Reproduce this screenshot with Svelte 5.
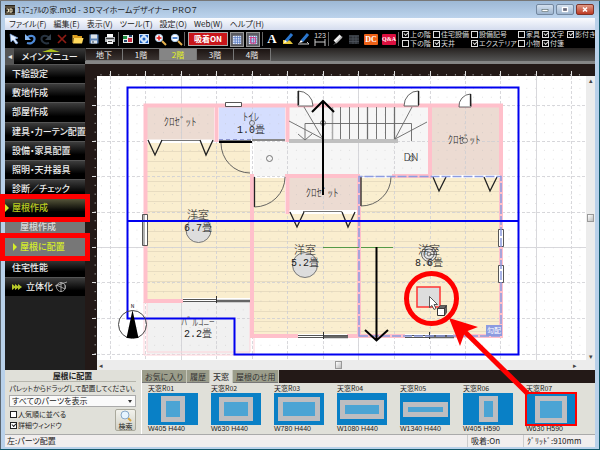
<script>
  const menus = ['ファイル(F)', '編集(E)', '表示(V)', 'ツール(T)', '設定(O)', 'Web(W)', 'ヘルプ(H)'];
  const floors = ['地下', '1階', '2階', '3階', '4階'];
  const toggles = [
    { w: 31, items: [['上の階', true], ['下の階', false]] },
    { w: 38, items: [['住宅設備', false], ['天井', true]] },
    { w: 47, items: [['設備記号', false], ['エクステリア', true]] },
    { w: 24, items: [['家具', false], ['小物', false]] },
    { w: 25, items: [['文字', true], ['付箋', true]] },
    { w: 30, items: [['影付き', true]] }
  ];
  const side = [
    { t: '下絵設定' }, { t: '敷地作成' }, { t: '部屋作成' }, { t: '建具・カーテン配置' },
    { t: '設備・家具配置' }, { t: '照明・天井器具' }, { t: '診断／チェック' },
    { t: '屋根作成', k: 'open', mark: true },
    { t: '屋根作成', k: 'sub' },
    { t: '屋根に配置', k: 'sub on', mark: true },
    { t: '住宅性能' }, { t: '立体化', k: 'solid' }
  ];
  const tabs = ['お気に入り', '履歴', '天窓', '屋根のせ用'];
  const parts = [
    { n: '天窓R01', s: 'W405 H440', w: 24, h: 26 },
    { n: '天窓R02', s: 'W630 H440', w: 34, h: 24 },
    { n: '天窓R03', s: 'W780 H440', w: 42, h: 24 },
    { n: '天窓R04', s: 'W1080 H440', w: 44, h: 19 },
    { n: '天窓R05', s: 'W1340 H440', w: 45, h: 15 },
    { n: '天窓R06', s: 'W405 H590', w: 19, h: 26 },
    { n: '天窓R07', s: 'W630 H590', w: 32, h: 27, picked: true }
  ];
  const gx = [110, 145, 181, 216, 252, 287, 323, 358, 394, 430, 465, 500, 536, 571];
  const gy = [105, 141, 176, 212, 247, 282, 318, 354];
  const solid = [181, 358, 536, 247];
  const minorX = Array.from({ length: 55 }, (_, i) => 101 + i * 8.86);
  const minorY = Array.from({ length: 32 }, (_, i) => 79 + i * 8.86);
</script>

<div class="window">
  <header class="title">
    <svg width="10" height="10" viewBox="0 0 10 10"><rect width="10" height="10" fill="#2b251d" /><path d="M0 2h10M0 9h10" stroke="#887c64" /><path d="M1.500 4h2v3h-2M5 3.500v4M5 4h2v3h-2" stroke="#eee2c0" fill="none" /></svg>
    <h1>1ﾏﾆｭｱﾙの家.m3d - ３Ｄマイホームデザイナー ＰＲＯ７</h1>
    <button class="wb" aria-label="最小化"><svg width="16" height="9"><rect x="5" y="4.500" width="6" height="2" fill="#fff" stroke="#566" stroke-width=".6" /></svg></button>
    <button class="wb" aria-label="最大化"><svg width="16" height="9"><rect x="5.500" y="2.500" width="5" height="4" fill="#667" stroke="#fff" stroke-width="1.300" /></svg></button>
    <button class="wb close" aria-label="閉じる"><svg width="16" height="9"><path d="M6 2.500l4 4M10 2.500l-4 4" stroke="#fff" stroke-width="1.600" /></svg></button>
  </header>

  <nav class="menu">{#each menus as m}<button>{m}</button>{/each}</nav>

  <div class="tools">
    <button aria-label="選択"><svg viewBox="0 0 16 16"><path d="M4 3l8 4-3 1 3 4-2 1-3-4-2 2z" fill="#e6f0ff" stroke="#7ba3e0" stroke-width=".7" /></svg></button>
    <button aria-label="元に戻す"><svg viewBox="0 0 16 16"><path d="M5 6.500C9 3.500 13 5 12.500 8.500S8 13 5 12" fill="none" stroke="#4e8ad8" stroke-width="2.200" /><path d="M3 3v6h6z" fill="#8bb9f0" /></svg></button>
    <button aria-label="やり直し"><svg viewBox="0 0 16 16"><path d="M11 6.500C7 3.500 3 5 3.500 8.500S8 13 11 12" fill="none" stroke="#273341" stroke-width="2" /><path d="M13 3v6H7z" fill="#34404c" /></svg></button>
    <button aria-label="削除"><svg viewBox="0 0 16 16"><path d="M4 4l8 8M12 4l-8 8" stroke="#8e1c14" stroke-width="1.700" /></svg></button>
    <button aria-label="開く"><svg viewBox="0 0 16 16"><path d="M3 4h4l1 1h4v2H3z" fill="#d99b1e" /><path d="M4 7h9.500L12 12.500H3z" fill="#ffd95c" /><path d="M3 4v8" stroke="#f0bd40" /></svg></button>
    <button aria-label="保存"><svg viewBox="0 0 16 16"><path d="M3.500 3.500h9v9h-9z" fill="#5c83b5" /><path d="M5 3.500h6v4H5zM5 9.500h6v3H5z" fill="#dde4ea" /><path d="M6 11h2" stroke="#345" /></svg></button>
    <button aria-label="印刷"><svg viewBox="0 0 16 16"><path d="M5 3h6v3H5z" fill="#fff" /><path d="M3 6h10v5H3z" fill="#b4b8bc" /><path d="M5 9h6v4H5z" fill="#f2f2f2" /><path d="M4 7.500h8M6 10.500h4" stroke="#444" /></svg></button>
    <i></i>
    <button aria-label="3D表示"><svg viewBox="0 0 16 16"><path d="M3 4h10v8H3z" fill="#e8eee8" /><path d="M3 5h4v3H3z" fill="#229144" /><path d="M8 7h4v4H8z" fill="#c92b40" /><path d="M4 9h3v2H4zM9 4h3v2H9z" fill="#26456e" /></svg></button>
    <button aria-label="全体表示"><svg viewBox="0 0 16 16"><path d="M3 3h10v10H3z" fill="#cfe3fa" /><path d="M4 4h3L4 7zM12 4H9l3 3zM4 12h3L4 9zM12 12H9l3-3z" fill="#195ec0" /><circle cx="8" cy="8" r="1.500" fill="#195ec0" /></svg></button>
    <button aria-label="拡大"><svg viewBox="0 0 16 16"><path d="M10 10l4 4" stroke="#e8b44e" stroke-width="2" /><circle cx="7" cy="7" r="3.700" fill="#fff" stroke="#aac8e8" /><path d="M7 4.500v5M4.500 7h5" stroke="#e21e1e" stroke-width="1.500" /></svg></button>
    <button aria-label="縮小"><svg viewBox="0 0 16 16"><path d="M10 10l4 4" stroke="#e8b44e" stroke-width="2" /><circle cx="7" cy="7" r="3.700" fill="#fff" stroke="#aac8e8" /><path d="M4.500 7h5" stroke="#1d62c4" stroke-width="1.500" /></svg></button>
    <i></i>
    <button class="snap">吸着ON</button>
    <button class="framed" aria-label="グリッド"><svg viewBox="0 0 13 14"><path d="M2 3h9v9H2z" fill="#e8eefc" /><path d="M2 5h9M2 7.500h9M2 10h9M4.500 3v9M7 3v9M9.500 3v9" stroke="#4a6fbb" stroke-width=".8" /></svg></button>
    <button class="framed" aria-label="寸法グリッド"><svg viewBox="0 0 13 14"><path d="M2 3h9v9H2z" fill="#e8eefc" /><path d="M2 5h9M2 7.500h9M2 10h9M4.500 3v9M7 3v9M9.500 3v9" stroke="#4a6fbb" stroke-width=".8" /><path d="M4 4v7h5V5H3" stroke="#e5317a" fill="none" /></svg></button>
    <i></i>
    <button class="letter">A</button>
    <button aria-label="塗り"><svg viewBox="0 0 16 16"><path d="M3 9l7 .500 3 3.500H3z" fill="#e8c83a" /><path d="M6 10l6-7" stroke="#2b77cf" stroke-width="3" /><path d="M4 12l1-3 2 2z" fill="#fff" /></svg></button>
    <button aria-label="線"><svg viewBox="0 0 16 16"><path d="M2 13h11l-2-2" stroke="#ccc" fill="none" /><path d="M6 10l6-7" stroke="#2b77cf" stroke-width="3" /><path d="M3 12l2-3 2 2z" fill="#fff" /></svg></button>
    <button class="dim">123<svg viewBox="0 0 12 7"><path d="M1 0v7M11 0v7M1 3h10" stroke="#ccc" fill="none" /></svg></button>
    <i></i>
    <button aria-label="消しゴム"><svg viewBox="0 0 16 16"><path d="M5 11l6-6" stroke="#eee" stroke-width="4" /><path d="M4 13.500l8-8" stroke="#888" /></svg></button>
    <button aria-label="表"><svg viewBox="0 0 16 16"><path d="M3 4h10v9H3z" fill="#2c3036" /><path d="M3 5h10M3 8h10M3 10.500h10M7 5v8M10 5v8" stroke="#4f555d" stroke-width=".8" /></svg></button>
    <button class="badge dc">DC</button>
    <button class="badge qa">Q&amp;A</button>
    <i></i>
    <div class="toggles">
      {#each toggles as g}
        <div style="width:{g.w}px">
          {#each g.items as [t, on]}<label><input type="checkbox" checked={on} />{t}</label>{/each}
        </div>
      {/each}
    </div>
  </div>

  <div class="heads">
    <button class="back" aria-label="戻る">◂</button>
    <div class="mainmenu">メインメニュー</div>
    <div class="floors">
      {#each floors as f}<button class:on={f === '2階'}>{f}</button>{/each}
    </div>
  </div>

  <main>
    <aside>
      <div class="list">
        {#each side as s}
          <button class={s.k ?? ''}>
            {#if s.k === 'solid'}<svg class="tri" width="10" height="6"><path d="M0 0l4 3-4 3zM3 0l4 3-4 3zM6 0l4 3-4 3z" fill="#b6c829" /></svg>{/if}
            {s.t}
            {#if s.k === 'solid'}<svg width="12" height="12" viewBox="0 0 12 12" fill="none" stroke="#bbb" stroke-width=".8"><circle cx="6" cy="6" r="4.500" /><path d="M0 5l6-2 6-2M1 4l5 2M6 1v10M6 6l4 2V4" /></svg>{/if}
            {#if s.mark}<span class="ring"></span>{/if}
          </button>
        {/each}
      </div>
    </aside>

    <section class="plan">
      <svg class="draw" aria-label="間取り図">
        <defs>
          <pattern id="dots" x="101" y="79" width="8.860" height="8.860" patternUnits="userSpaceOnUse"><rect width="1" height="1" fill="#b9b9b9" opacity=".4" /></pattern>
          <pattern id="floor" x="0" y="141" width="20" height="10" patternUnits="userSpaceOnUse"><rect width="20" height="10" fill="#faeecf" /><rect width="20" height="1" fill="#e8dcc0" /></pattern>
        </defs>
        <g transform="translate(-85 -64)">
          <rect x="85" y="64" width="2000" height="2000" fill="#231917" />
          <rect x="97" y="76" width="2000" height="2000" fill="#fff" />
          <g stroke="#999" stroke-width="1">
            {#each minorX as x}<path d="M{x} 74v1.500" />{/each}
            {#each minorY as y}<path d="M94.500 {y}h1.500" />{/each}
            {#each gx as x}<path d="M{x + 0.5} 71v5" stroke="#ddd" />{/each}
            {#each gy as y}<path d="M92 {y + 0.5}h4" stroke="#ddd" />{/each}
          </g>

          <path d="M147 107h67v33h-67z" fill="#ecdbd2" />
          <path d="M219 107h66v33h-66z" fill="#d5defe" />
          <path d="M254 142h34V107h141v69H254z" fill="#f6f6f6" />
          <path d="M432 107h68v68h-68z" fill="#ecdbd2" />
          <path d="M289 178h68v32h-68z" fill="#ecdbd2" />
          <path d="M147 143h103v156H147zM254 178h31v36h73v120H254zM360 178h140v156H360z" fill="url(#floor)" />
          <path d="M147 302h103v52H147z" fill="#f1f1f1" />
          <rect x="97" y="76" width="2000" height="2000" fill="url(#dots)" />
          <g stroke="#cfcfd4" opacity=".8">
            {#each gx as x}<path d="M{x + 0.5} 76v284" stroke-dasharray={solid.includes(x) ? 'none' : '3 2'} />{/each}
            {#each gy as y}<path d="M97 {y + 0.5}h490" stroke-dasharray={solid.includes(y) ? 'none' : '3 2'} />{/each}
          </g>

          <path d="M144 302v53h110v-18M147 302v50h103v-50" fill="none" stroke="#ffd3da" />
          <g fill="none" stroke="#ffc0cb" stroke-width="4">
            <path d="M183 301h-37.500V105.500H501V336H252V174" />
            <path d="M216.500 105v37M287.500 105v37M285 176h75M287.500 176v38M359 176v160M392 176h38M430 105v73" />
          </g>
          <path d="M147 141h66M290 212h66M432 176.500h68" stroke="#fff" stroke-width="3" />
          <path d="M161 140.500h39M303 211.500h39M219 140.500h32" stroke="#777" />
          <path d="M219 139.500h33" stroke="#8b94d0" stroke-dasharray="4 3" />
          <path d="M219 142h33" stroke="#000" stroke-width="2" />
          <path d="M252 140h33" stroke="#888" stroke-width="2" />

          <g fill="none" stroke="#222" stroke-width="1.300">
            <path d="M148 140l7 15 7-15M200 140l6 15 7-15M290 212l7 15 7-15M342 212l6 15 7-15M433 177l6 14 7-14M484 177l6 14 7-14" />
            <path d="M254.500 177v30M361 177v29M298.500 91v14M418.500 91v14M470.500 94v12" />
          </g>
          <g fill="none" stroke="#555" stroke-width=".9">
            <path d="M221 143A29 30 0 0 0 250 173M254.500 207A31 30 0 0 0 285 177M361 206A30 29 0 0 0 391 177" />
          </g>
          <g fill="#fff" stroke="#555" stroke-width=".9">
            <path d="M298 91A15 15 0 0 1 313 106h-15zM418.500 91A14 15 0 0 0 404 106h14.500zM470.500 94A12 12 0 0 0 459 107h12z" />
            <path d="M225.500 102.500h16v4h-16zM142.500 214.500h5v31h-5zM498.500 229.500h5v17h-5zM498.500 265.500h5v17h-5z" stroke="#444" />
            <path d="M144 214v31" />
          </g>
          <path d="M298.500 91v14M418.500 91v14M470.500 94v12" stroke="#222" stroke-width="1.300" />
          <path d="M183 300h67M298 336h49M405 336h48" stroke="#fff" stroke-width="4" />
          <path d="M183 299.500h34M183 301.500h34M298 335.500h50M405 335.500h48M298 337.500h25M405 337.500h25" stroke="#555" />
          <path d="M216 301h34M323 337h25M430 337h24" stroke="#666" stroke-width="2.500" />
          <path d="M216.500 296v7M323.500 332v7M429.500 332v7" stroke="#333" />

          <path d="M289 141h109" stroke="#c0c0c0" stroke-width="4" />
          <path d="M332.500 107v33M394.500 107v33M367.500 107v33" stroke="#aaa" stroke-width="1.500" />
          <g fill="none" stroke="#666" stroke-width=".9">
            <path d="M340.500 107v32M349.500 107v32M358.500 107v32M367.500 107v32M376.500 107v32M385.500 107v32M394.500 107v32" />
            <path d="M323 139l-34-18M323 139l-19-32M395 139l17-32M395 139l32-17M305 139v-15.500h106.500V141M298 134l7 6 7-6" />
            <circle cx="323" cy="123" r="2.500" /><circle cx="252" cy="123" r="2.500" /><circle cx="269.500" cy="158.500" r="3" /><circle cx="411.500" cy="158.500" r="2.500" /><circle cx="465" cy="140.500" r="2.500" />
          </g>

          <path d="M359 336V176.500h142V336z" fill="none" stroke="#8c9be0" stroke-width="1.500" stroke-dasharray="9 2" />
          <path d="M323 247.500h36M361 247.500h32" stroke="#559a48" />
          <circle cx="198.500" cy="230" r="12.500" fill="#ddd" stroke="#777" />
          <circle cx="305" cy="265" r="12.500" fill="#ddd" stroke="#777" />
          <g fill="#e4e4e4" stroke="#555" stroke-width=".9"><circle cx="429" cy="254" r="7.500" /><circle cx="429" cy="254" r="5" /><circle cx="429" cy="254" r="2" /><circle cx="429" cy="263" r="2" /></g>

          <g class="lbl">
            <text x="180" y="126">ｸﾛｾﾞｯﾄ</text><text x="322" y="197">ｸﾛｾﾞｯﾄ</text><text x="464" y="144">ｸﾛｾﾞｯﾄ</text>
            <text x="251" y="121">ﾄｲﾚ</text><text class="m" x="251" y="133">1.0畳</text>
            <text x="198" y="219">洋室</text><text class="m" x="198" y="231">6.7畳</text>
            <text x="305" y="254">洋室</text><text class="m" x="305" y="266">5.2畳</text>
            <text x="429" y="254">洋室</text><text class="m" x="429" y="266">8.6畳</text>
            <text x="198" y="326">ﾊﾞﾙｺﾆｰ</text><text class="m" x="198" y="337">2.2畳</text>
            <text x="411" y="161">DN</text>
          </g>

          <g fill="none" stroke="#000" stroke-width="2">
            <path d="M323 195V101M312 112l11-11 11 11M376.500 247v93M365 330l11.500 10.500L388 330" />
          </g>
          <path d="M127.500 87.500H518.500V354.500H234.500V318.500H127.500zM127.500 221H518.500" fill="none" stroke="#0000f0" stroke-width="2" />

          <circle cx="132.500" cy="324.500" r="14" fill="none" stroke="#444" />
          <path d="M132.500 310l6 28h-12z" fill="#000" /><text class="north" x="132.500" y="308">N</text>
          <rect x="486" y="325" width="16" height="11" fill="#8c9be0" /><text class="tag" x="494" y="333">勾配</text>

          <rect x="417" y="287" width="23" height="20" fill="#ddd" stroke="#f33" stroke-width="1.500" />
          <path d="M429.500 296.500v11l2.500-2 2 4 2-1-2-4h3.500z" fill="#fff" stroke="#333" stroke-width=".8" />
          <path d="M437.500 308.500h7v7h-7z" fill="#fff" stroke="#333" /><path d="M437.500 308.500l3-3h6l-2 3zM444.500 308.500l2-3v7l-2 3z" fill="#666" stroke="#333" stroke-width=".7" />
        </g>
      </svg>
      <div class="vs"><span>▴</span><b></b><span>▾</span></div>
      <div class="hs"><span>◂</span><b></b><span>▸</span></div>
    </section>
  </main>

  <footer class="palette">
    <form class="filter">
      <h2>屋根に配置</h2>
      <p>パレットからドラッグして配置してください。</p>
      <div class="drop"><select aria-label="パーツの表示"><option>すべてのパーツを表示</option></select></div>
      <div class="opts">
        <div>
          <label><input type="checkbox" />人気順に並べる</label>
          <label><input type="checkbox" checked />詳細ウィンドウ</label>
        </div>
        <button type="button" class="find"><svg width="12" height="12" viewBox="0 0 12 12"><path d="M8 8l3 3" stroke="#d8a53e" stroke-width="2" /><circle cx="5" cy="5" r="4" fill="#e6f4ff" stroke="#88a8c8" /></svg>検索</button>
      </div>
    </form>
    <section class="parts">
      <nav>{#each tabs as t}<button class:on={t === '天窓'}>{t}</button>{/each}</nav>
      <div class="tiles">
        {#each parts as p}
          <figure>
            <figcaption>{p.n}</figcaption>
            <div class="pic" class:picked={p.picked}><span style="width:{p.w}px;height:{p.h}px"></span></div>
            <small>{p.s}</small>
          </figure>
        {/each}
      </div>
    </section>
  </footer>

  <div class="status"><span>左:パーツ配置</span><span class="c2">吸着:On</span><span class="c3">ｸﾞﾘｯﾄﾞ:910mm</span></div>

  <svg class="note" aria-hidden="true">
    <circle cx="431.500" cy="298.500" r="25" fill="none" stroke="#f00" stroke-width="5" />
    <path d="M464 331l64 63" stroke="#f00" stroke-width="5" /><path d="M449 318l29 9-13 5-5 14z" fill="#f00" />
  </svg>
</div>

<style>
  :global(body) { background: #b9d1ea; }
  .window {
    position: relative; box-sizing: border-box; min-height: 100vh; display: flex; flex-direction: column;
    padding: 0 5px 3px; overflow: hidden; color: #222;
    border-top: 1px solid #777; background: linear-gradient(90deg, #5b6670 0 1px, #b9d1ea 1px calc(100% - 1px), #12586a calc(100% - 1px));
    box-shadow: inset 0 -1px #12586a;
    font-family: "Noto Sans CJK JP", sans-serif; font-size: 8px; line-height: 10px; font-feature-settings: "palt";
  }
  button { font: inherit; font-feature-settings: inherit; color: inherit; border: 0; background: none; padding: 0; margin: 0; white-space: nowrap; }
  h1, h2, p, figure { margin: 0; font: inherit; }
  .title { display: flex; align-items: center; height: 17px; background: linear-gradient(#9db8d5, #bcd3ec); margin: 0 -4px; padding: 0 4px; }
  .title h1 { flex: 1; margin-left: 2px; white-space: nowrap; }
  .wb { display: flex; width: 16px; height: 9px; margin-left: 2px; border: 1px solid #7488a0; border-radius: 2px; background: linear-gradient(#d3e0ee, #9eb5cf); box-sizing: content-box; }
  .close { background: linear-gradient(#e09a86, #bd3a24); border-color: #803328; margin-right: 1px; }
  .menu { display: flex; gap: 7px; height: 12px; padding-left: 4px; background: linear-gradient(#fafbfe, #d4dcee); }
  .tools { display: flex; align-items: center; height: 18px; background: #000; color: #ddd; padding-left: 1px; overflow: hidden; flex: none; }
  .tools > button { width: 16px; height: 16px; flex: none; }
  .tools > button svg { display: block; width: 100%; height: 100%; }
  .tools > i { width: 2px; flex: none; height: 14px; background: linear-gradient(90deg, #666 1px, #000 1px); }
  .tools > .snap { width: 40px; height: 14px; margin: 0 2px; border: 1px solid #aaa; background: #c8161b; color: #fff; font-weight: 700; line-height: 12px; }
  .tools > .framed { width: 14px; height: 15px; margin-right: 2px; border: 1px solid #999; background: #5a5a60; }
  .tools > .letter { font: 700 13px "Liberation Serif", serif; color: #fff; }
  .tools > .dim { font: 7px/7px "Liberation Sans", sans-serif; }
  .tools > .dim svg { height: 7px; }
  .tools > .badge { width: 14px; height: 11px; margin: 0 2px; border-radius: 1px; color: #fff; font: 700 8px/11px "Liberation Serif", serif; }
  .dc { background: #ee6116; }
  .tools > .qa { background: #dd1040; font-size: 6px; }
  .toggles { display: flex; margin-left: 2px; font-size: 7px; height: 18px; }
  .toggles div { flex: none; }
  label { display: flex; align-items: center; height: 9px; line-height: 9px; white-space: nowrap; }
  input { appearance: none; box-sizing: border-box; width: 7px; height: 7px; margin: 0 1px 0 0; border: 1px solid currentColor; color: inherit; position: relative; flex: none; }
  input:checked::after { content: ""; position: absolute; left: 1px; top: 0; width: 4px; height: 3px; border: solid currentColor; border-width: 0 0 1px 1px; transform: rotate(-45deg); box-sizing: border-box; }

  .heads { display: flex; height: 16px; flex: none; background: #1a1a1a; color: #eee; }
  .back { width: 9px; background: #555; }
  .mainmenu { position: relative; width: 71px; text-align: center; font-size: 9px; font-weight: 500; line-height: 18px; background: linear-gradient(#3a3a3a, #000); }
  .mainmenu::before { content: ""; position: absolute; left: 28px; top: 1px; border: solid transparent; border-width: 0 9px 3px; border-bottom-color: #b0c31c; }
  .floors { flex: 1; display: flex; box-sizing: border-box; border-bottom: 3px solid #858585; background: linear-gradient(#262220, #555); padding-left: 1px; }
  .floors button { width: 37px; box-sizing: border-box; border: 1px solid #777; border-left: 0; background: linear-gradient(#1c1412, #3a3331); line-height: 11px; }
  .floors .on { background: #858585; color: #e3f51b; }

  main { display: flex; flex: 1; min-height: 306px; }
  aside { width: 80px; flex: none; background: #202020; }
  .list { display: flex; flex-direction: column; height: 232px; }
  .list button { position: relative; flex: 1; text-align: left; padding-left: 7px; color: #eee; font-size: 9px; font-weight: 500; line-height: 12px; background: linear-gradient(#3d3d3d, #000 70%); border-top: 1px solid #555; }
  .list svg { vertical-align: middle; }
  .list .tri { margin-right: 2px; }
  .list .open { color: #b9cc20; background: linear-gradient(#55553a, #000 70%); }
  .list .sub { padding-left: 15px; background: #777; color: #ddd; border-top-color: #888; }
  .list .on { color: #d5ee2a; border-bottom: 2px solid #d5ee2a; }
  .open::before, .list .on::before { content: ""; position: absolute; left: 0; top: 5px; border: solid transparent; border-width: 4px 0 4px 4px; border-left-color: #d5ee2a; }
  .list .on::before { left: 8px; }
  .ring { position: absolute; z-index: 2; inset: -5px; border: 5px solid #f00; }

  .plan { flex: 1; min-width: 0; display: grid; grid-template: 1fr 10px / 1fr 9px; background: #231917; }
  .draw { display: block; width: 100%; height: 100%; overflow: hidden; }
  .vs, .hs { display: flex; justify-content: space-between; align-items: center; background: #ececec; color: #444; font-size: 7px; line-height: 8px; }
  .vs { flex-direction: column; margin-top: 12px; }
  .hs { margin-left: 12px; grid-column: 1 / 3; padding: 0 18px 0 2px; }
  .vs b, .hs b { width: 7px; height: 8px; box-sizing: border-box; border: 1px solid #999; background: linear-gradient(135deg, #fff, #bbb); }
  .lbl text { font-size: 11px; text-anchor: middle; fill: #222; font-weight: 300; font-feature-settings: normal; }
  .lbl .m { font-family: "Liberation Mono", "Noto Sans CJK JP", monospace; font-size: 10px; }
  .north { font-size: 5px; text-anchor: middle; }
  .tag { font-size: 7px; text-anchor: middle; fill: #fff; }

  .palette { display: flex; height: 64px; flex: none; background: #e0e0d9; }
  .filter { width: 137px; flex: none; box-sizing: border-box; padding: 1px 5px 0 4px; border-right: 1px solid #fff; }
  .filter h2 { text-align: center; font-weight: 700; line-height: 10px; border-bottom: 1px solid #b5b5ac; }
  .filter p { text-align: center; font-size: 7px; line-height: 10px; padding: 1px 0 2px; white-space: nowrap; margin: 0 -4px; }
  .drop { position: relative; }
  .drop::after { content: ""; position: absolute; right: 4px; top: 5px; border: solid transparent; border-width: 3px 2px 0; border-top-color: #333; pointer-events: none; }
  select { display: block; appearance: none; width: 100%; height: 12px; box-sizing: border-box; border: 1px solid #aaa; background: #fafafa; font: inherit; font-feature-settings: inherit; line-height: 10px; padding: 0 2px; color: #222; border-radius: 0; }
  .opts { display: flex; justify-content: space-between; font-size: 7px; padding-top: 2px; }
  .opts label { height: 11px; padding-left: 1px; }
  .opts input { background: #fff; }
  .find { display: flex; flex-direction: column; align-items: center; justify-content: center; width: 21px; height: 22px; border: 1px solid #aaa99c; border-radius: 2px; background: linear-gradient(#f2f2ec, #d0d0c6); box-sizing: border-box; line-height: 8px; }
  .parts { flex: 1; min-width: 0; display: flex; flex-direction: column; }
  .parts nav { display: flex; height: 13px; background: #231917; }
  .parts nav button { padding: 0 3px; background: #9b9d8b; border-right: 1px solid #c5c6ba; color: #333; }
  .parts nav button:not(.on) { box-shadow: inset 0 -1px #777; }
  .parts nav .on { background: #e0e0d9; font-weight: 500; }
  .tiles { display: flex; gap: 13px; padding-left: 6px; overflow: hidden; font-size: 7px; line-height: 10px; }
  figure { width: 50px; flex: none; white-space: nowrap; }
  .pic { height: 32px; box-sizing: border-box; display: flex; align-items: center; justify-content: center; background: #0980c6; }
  .pic.picked { outline: 2px solid #f00; outline-offset: -1px; }
  .pic span { box-sizing: border-box; border: 5px solid #bdbdc0; background: #4ba4d4; }
  small { display: block; font: 7px/8px "Liberation Sans", sans-serif; }
  .status { display: flex; height: 13px; flex: none; background: #f1eeee; border-top: 1px solid #aaa; box-sizing: border-box; line-height: 11px; padding: 0 2px; }
  .status span:first-child { flex: 1; }
  .c2 { width: 52px; border-left: 1px solid #ccc; padding-left: 3px; }
  .c3 { width: 66px; border-left: 1px solid #ccc; padding-left: 3px; }
  .note { position: absolute; left: 0; top: -1px; width: 100%; height: 100%; pointer-events: none; z-index: 3; }
</style>
